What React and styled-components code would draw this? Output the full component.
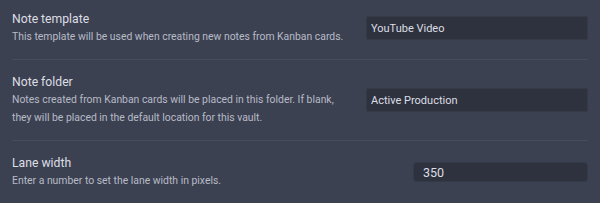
import React from 'react'
import styled, { createGlobalStyle } from 'styled-components'

const GlobalStyle = createGlobalStyle`
  html, body {
    margin: 0;
    padding: 0;
    background: #3c4152;
  }
  body {
    font-family: Roboto, "Liberation Sans", Arial, sans-serif;
  }
`

const settings = [
  {
    id: 1,
    name: 'Note template',
    desc: 'This template will be used when creating new notes from Kanban cards.',
    value: 'YouTube Video',
  },
  {
    id: 2,
    name: 'Note folder',
    desc: 'Notes created from Kanban cards will be placed in this folder. If blank, they will be placed in the default location for this vault.',
    value: 'Active Production',
  },
  {
    id: 3,
    name: 'Lane width',
    desc: 'Enter a number to set the lane width in pixels.',
    value: '350',
    isNumber: true,
  },
]

export default function App() {
  return (
    <>
      <GlobalStyle />
      <Container>
        {settings.map((item) => (
          <SettingItem key={item.id}>
            <Info>
              <Name>{item.name}</Name>
              <Description>{item.desc}</Description>
            </Info>
            <Control>
              <TextInput
                type="text"
                defaultValue={item.value}
                isNumber={item.isNumber}
              />
            </Control>
          </SettingItem>
        ))}
      </Container>
    </>
  )
}

const Container = styled.div`
  padding: 0 12px;
  height: 203px;
  overflow: hidden;
`

const SettingItem = styled.div`
  display: flex;
  align-items: center;
  gap: 14px;
  padding: 13px 0;
  border-top: 1px solid #464c5d;
  &:first-child {
    border-top: none;
    padding-top: 10px;
  }
`

const Info = styled.div`
  flex: 1;
  min-width: 0;
`

const Name = styled.div`
  color: #dcdee4;
  font-size: 12.2px;
  line-height: 18px;
`

const Description = styled.div`
  color: #b7bbc6;
  font-size: 10.4px;
  line-height: 18px;
`

const Control = styled.div`
  display: flex;
  justify-content: flex-end;
  width: 222px;
`

const TextInput = styled.input`
  box-sizing: border-box;
  width: 222px;
  height: 24px;
  padding: 0 4px;
  background: #2e323e;
  border: 1px solid #353a47;
  border-radius: 2px;
  color: #dcdee4;
  font-family: Roboto, "Liberation Sans", Arial, sans-serif;
  font-size: 11px;
  outline: none;
  ${(props) =>
    props.isNumber &&
    `
    width: 175px;
    height: 20px;
    padding: 0 9px;
    border-radius: 4px;
    font-size: 12.5px;
  `}
`
